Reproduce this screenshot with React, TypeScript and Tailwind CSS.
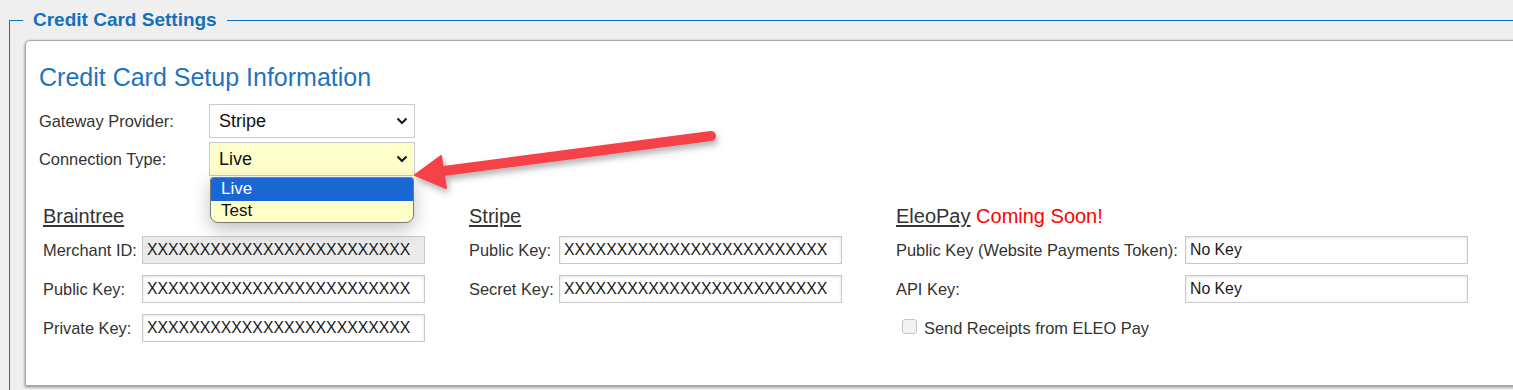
import React from "react";

const XS = "XXXXXXXXXXXXXXXXXXXXXXXXX";

const Chevron: React.FC = () => (
  <svg width="12" height="8" viewBox="0 0 12 8" className="shrink-0">
    <path d="M1.5 1.5 L6 6 L10.5 1.5" stroke="#111" strokeWidth="2" fill="none" />
  </svg>
);

const FakeSelect: React.FC<{ value: string; yellow?: boolean }> = ({ value, yellow }) => (
  <div
    className={
      yellow
        ? "flex h-[34px] w-[206px] items-center justify-between border border-[#cacaca] bg-[#ffffcc] pl-[9px] pr-[6px] text-[18px] text-[#111]"
        : "flex h-[34px] w-[206px] items-center justify-between border border-[#cacaca] bg-white pl-[9px] pr-[6px] text-[18px] text-[#111]"
    }
  >
    <span>{value}</span>
    <Chevron />
  </div>
);

const TextBox: React.FC<{ value: string; grey?: boolean }> = ({ value, grey }) => (
  <input
    readOnly
    value={value}
    className={
      grey
        ? "h-[28px] w-[283px] border border-[#c9c9c9] bg-[#ebebeb] px-[4px] text-[15.8px] text-[#1a1a1a] outline-none"
        : "h-[28px] w-[283px] border border-[#c9c9c9] bg-white px-[4px] text-[15.8px] text-[#1a1a1a] shadow-[inset_0_1px_3px_rgba(0,0,0,0.12)] outline-none"
    }
  />
);

const Row: React.FC<{ label: string; labelWidth: string; children: React.ReactNode }> = ({
  label,
  labelWidth,
  children,
}) => (
  <div className="flex h-[28px] items-center">
    <span className={labelWidth + " shrink-0 text-[16.4px] text-[#333]"}>{label}</span>
    {children}
  </div>
);

export default function App() {
  return (
    <div className="relative h-[390px] w-[1513px] overflow-hidden bg-[#efefef] pl-[9px] pt-[9px] font-['Liberation_Sans',Arial,sans-serif] text-[#333]">
      <fieldset className="h-[420px] min-w-0 border-l border-t border-[#0b72c4]">
        <legend className="ml-[13px] px-[10px] text-[19px] font-bold leading-[22px] text-[#1570bb]">
          Credit Card Settings
        </legend>
        <div className="ml-[15px] mt-[9px] h-[346px] w-[1600px] rounded-tl-[5px] border border-[#a9a9a9] bg-white pl-[13px] pt-[21px] shadow-[0_1px_3px_rgba(0,0,0,0.45)]">
          <h2 className="text-[25px] leading-[30px] text-[#1f73bd]">Credit Card Setup Information</h2>

          <div className="mt-[12px] flex flex-col gap-[4px]">
            <div className="flex h-[34px] items-center">
              <span className="w-[170px] text-[16.4px] text-[#333]">Gateway Provider:</span>
              <FakeSelect value="Stripe" />
            </div>
            <div className="flex h-[34px] items-center">
              <span className="w-[170px] text-[16.4px] text-[#333]">Connection Type:</span>
              <div className="relative">
                <FakeSelect value="Live" yellow />
                <div className="absolute left-[1px] top-[35px] z-10 w-[204px] overflow-hidden rounded-b-[8px] rounded-t-[3px] border border-[#7a7a7a] bg-[#ffffc8] text-[17px] text-[#111] shadow-[0_6px_18px_rgba(0,0,0,0.25)]">
                  <div className="flex h-[23px] items-center bg-[#1a67d3] pb-[2px] pl-[10px] text-white">Live</div>
                  <div className="flex h-[21px] items-center pb-[2px] pl-[10px]">Test</div>
                </div>
              </div>
            </div>
          </div>

          <div className="mt-[28px] grid grid-cols-[426px_427px_1fr] pl-[4px]">
            <div>
              <h3 className="text-[20px] leading-[24px] text-[#333] underline underline-offset-[2px]">Braintree</h3>
              <div className="mt-[8px] flex flex-col gap-[11px]">
                <Row label="Merchant ID:" labelWidth="w-[99px]">
                  <TextBox value={XS} grey />
                </Row>
                <Row label="Public Key:" labelWidth="w-[99px]">
                  <TextBox value={XS} />
                </Row>
                <Row label="Private Key:" labelWidth="w-[99px]">
                  <TextBox value={XS} />
                </Row>
              </div>
            </div>

            <div>
              <h3 className="text-[20px] leading-[24px] text-[#333] underline underline-offset-[2px]">Stripe</h3>
              <div className="mt-[8px] flex flex-col gap-[11px]">
                <Row label="Public Key:" labelWidth="w-[90px]">
                  <TextBox value={XS} />
                </Row>
                <Row label="Secret Key:" labelWidth="w-[90px]">
                  <TextBox value={XS} />
                </Row>
              </div>
            </div>

            <div>
              <h3 className="text-[20px] leading-[24px] text-[#333]">
                <span className="underline underline-offset-[2px]">EleoPay</span>{" "}
                <span className="text-[#ff0000]">Coming Soon!</span>
              </h3>
              <div className="mt-[8px] flex flex-col gap-[11px]">
                <Row label="Public Key (Website Payments Token):" labelWidth="w-[289px]">
                  <TextBox value="No Key" />
                </Row>
                <Row label="API Key:" labelWidth="w-[289px]">
                  <TextBox value="No Key" />
                </Row>
                <div className="flex h-[28px] items-center">
                  <span className="mb-[4px] ml-[6px] h-[15px] w-[15px] rounded-[3px] border border-[#c6c6c6] bg-[#f2f2f2]" />
                  <span className="ml-[7px] text-[16.4px] text-[#333]">Send Receipts from ELEO Pay</span>
                </div>
              </div>
            </div>
          </div>
        </div>
      </fieldset>

      <svg className="pointer-events-none absolute left-0 top-0 z-20" width="1513" height="390">
        <defs>
          <filter id="arrowShadow" x="-10%" y="-50%" width="120%" height="200%">
            <feDropShadow dx="2" dy="4" stdDeviation="3" floodColor="#000" floodOpacity="0.3" />
          </filter>
        </defs>
        <g filter="url(#arrowShadow)">
          <line x1="711" y1="136" x2="436" y2="172" stroke="#f5424a" strokeWidth="10" strokeLinecap="round" />
          <polygon points="415,175 441,156 446,188" fill="#f5424a" strokeLinejoin="round" stroke="#f5424a" strokeWidth="2" />
        </g>
      </svg>
    </div>
  );
}
